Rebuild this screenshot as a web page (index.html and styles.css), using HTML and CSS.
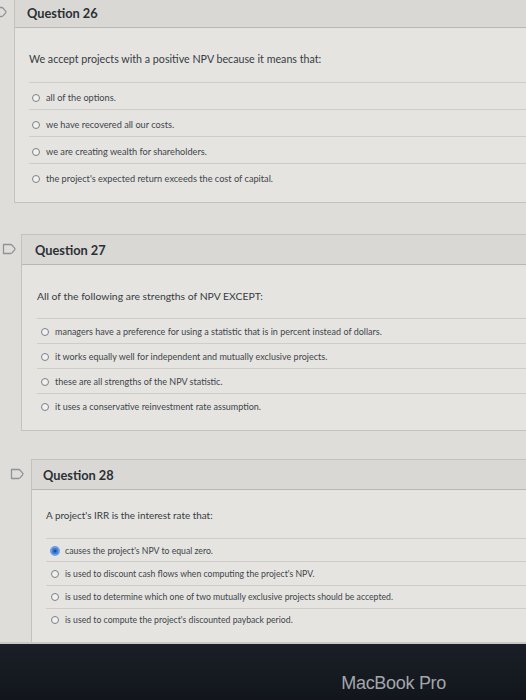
FILE: index.html
```html
<!DOCTYPE html>
<html lang="en">
<head>
<meta charset="utf-8">
<title>Quiz</title>
<link rel="stylesheet" href="styles.css">
</head>
<body>
<main class="screen">
  <section class="question q26">
    <div class="gutter">
      <svg class="flag" viewBox="0 0 14 12" width="14" height="12"><path d="M1.5 1.5 H8.5 Q9.5 1.5 10.3 2.4 L12.6 5.2 Q13.2 6 12.6 6.8 L10.3 9.6 Q9.5 10.5 8.5 10.5 H1.5 Z" fill="none" stroke="#8e9399" stroke-width="1.3" stroke-linejoin="round"/></svg>
    </div>
    <div class="card">
      <header class="card-head"><h2>Question 26</h2></header>
      <div class="card-body">
        <p class="prompt">We accept projects with a positive NPV because it means that:</p>
        <ul class="answers">
          <li><span class="radio"></span>all of the options.</li>
          <li><span class="radio"></span>we have recovered all our costs.</li>
          <li><span class="radio"></span>we are creating wealth for shareholders.</li>
          <li><span class="radio"></span>the project's expected return exceeds the cost of capital.</li>
        </ul>
      </div>
    </div>
  </section>

  <section class="question q27">
    <div class="gutter">
      <svg class="flag" viewBox="0 0 14 12" width="14" height="12"><path d="M1.5 1.5 H8.5 Q9.5 1.5 10.3 2.4 L12.6 5.2 Q13.2 6 12.6 6.8 L10.3 9.6 Q9.5 10.5 8.5 10.5 H1.5 Z" fill="none" stroke="#8e9399" stroke-width="1.3" stroke-linejoin="round"/></svg>
    </div>
    <div class="card">
      <header class="card-head"><h2>Question 27</h2></header>
      <div class="card-body">
        <p class="prompt">All of the following are strengths of NPV EXCEPT:</p>
        <ul class="answers">
          <li><span class="radio"></span>managers have a preference for using a statistic that is in percent instead of dollars.</li>
          <li><span class="radio"></span>it works equally well for independent and mutually exclusive projects.</li>
          <li><span class="radio"></span>these are all strengths of the NPV statistic.</li>
          <li><span class="radio"></span>it uses a conservative reinvestment rate assumption.</li>
        </ul>
      </div>
    </div>
  </section>

  <section class="question q28">
    <div class="gutter">
      <svg class="flag" viewBox="0 0 14 12" width="14" height="12"><path d="M1.5 1.5 H8.5 Q9.5 1.5 10.3 2.4 L12.6 5.2 Q13.2 6 12.6 6.8 L10.3 9.6 Q9.5 10.5 8.5 10.5 H1.5 Z" fill="none" stroke="#8e9399" stroke-width="1.3" stroke-linejoin="round"/></svg>
    </div>
    <div class="card">
      <header class="card-head"><h2>Question 28</h2></header>
      <div class="card-body">
        <p class="prompt">A project's IRR is the interest rate that:</p>
        <ul class="answers">
          <li><span class="radio checked"></span>causes the project's NPV to equal zero.</li>
          <li><span class="radio"></span>is used to discount cash flows when computing the project's NPV.</li>
          <li><span class="radio"></span>is used to determine which one of two mutually exclusive projects should be accepted.</li>
          <li><span class="radio"></span>is used to compute the project's discounted payback period.</li>
        </ul>
      </div>
    </div>
  </section>
</main>
<footer class="bezel"><span class="brand">MacBook Pro</span></footer>
</body>
</html>
```
FILE: styles.css
```css
* { box-sizing: border-box; }
html, body { margin: 0; padding: 0; }
body {
  width: 526px;
  height: 700px;
  overflow: hidden;
  background: #dedcd8;
  font-family: Lato, "Open Sans", sans-serif;
  color: #3b4248;
  display: flex;
  flex-direction: column;
}
.screen {
  height: 644px;
  display: flex;
  flex-direction: column;
  background: #dfddd9;
  border-bottom: 2px solid #c9c8c5;
  overflow: hidden;
}
.question {
  display: flex;
  align-items: flex-start;
  --gutter: 14px;
  --flag-x: -7px;
  --head-x: 12px;
  --pad-x: 14px;
  --opt-x: 3px;
  --prompt-top: 22px;
  --prompt-gap: 14px;
  --prompt-size: 10.7px;
  --opt-size: 9.2px;
  --row: 27px;
  --row-top: 9px;
  --body-bottom: 12px;
}
.q26 { margin-top: -3px; }
.q27 {
  margin-top: 31px;
  --gutter: 21px; --flag-x: 2px; --head-x: 13px; --pad-x: 15px; --opt-x: 4px;
  --prompt-top: 22px; --prompt-gap: 13px; --prompt-size: 10.4px; --opt-size: 9px;
  --row: 25px; --row-top: 7px; --body-bottom: 12px;
}
.q28 {
  margin-top: 28px;
  --gutter: 31px; --flag-x: 10px; --head-x: 11px; --pad-x: 14px; --opt-x: 5px;
  --prompt-top: 16px; --prompt-gap: 14px; --prompt-size: 9.9px; --opt-size: 8.7px;
  --row: 23.3px; --row-top: 5.5px; --body-bottom: 12px;
}
.gutter {
  width: var(--gutter);
  flex: none;
  height: 30px;
  display: flex;
  align-items: center;
}
.flag { margin-left: var(--flag-x); flex: none; }
.card {
  flex: 1;
  margin-right: -12px;
  border: 1px solid #c4c2be;
  background: #e6e4e1;
}
.card-head {
  height: 30px;
  background: #dad8d4;
  border-bottom: 1px solid #b9b7b3;
  display: flex;
  align-items: center;
  padding-left: var(--head-x);
}
.card-head h2 {
  margin: 0;
  font-size: 12.8px;
  font-weight: 700;
  color: #2a3036;
}
.card-body {
  padding: var(--prompt-top) 0 var(--body-bottom) var(--pad-x);
}
.prompt {
  margin: 0 0 var(--prompt-gap);
  font-size: var(--prompt-size);
  line-height: 18px;
  color: #353c42;
}
.answers {
  list-style: none;
  margin: 0;
  padding: 0;
}
.answers li {
  height: var(--row);
  border-top: 1px solid #cfcdca;
  padding: var(--row-top) 0 0 var(--opt-x);
  display: flex;
  align-items: flex-start;
  font-size: var(--opt-size);
  line-height: 12px;
  color: #3d4449;
}
.radio {
  flex: none;
  width: 8px;
  height: 8px;
  margin: 2px 6px 0 0;
  border-radius: 50%;
  border: 1px solid #7b8288;
  background: #f1f0ee;
}
.radio.checked {
  width: 10px;
  height: 10px;
  margin: 1px 5px 0 -1px;
  border: 2px solid #6aa0e6;
  background: #1d4f9a;
  box-shadow: inset 0 0 0 1.5px #3d7fd8;
}
.bezel {
  flex: 1;
  background: linear-gradient(#1a1f27, #12161c);
  display: flex;
  justify-content: flex-end;
  align-items: flex-end;
  padding: 0 80px 6px 0;
}
.brand {
  font-family: "Liberation Sans", Arial, sans-serif;
  font-size: 18px;
  letter-spacing: -0.3px;
  color: #a3a6aa;
}
```
